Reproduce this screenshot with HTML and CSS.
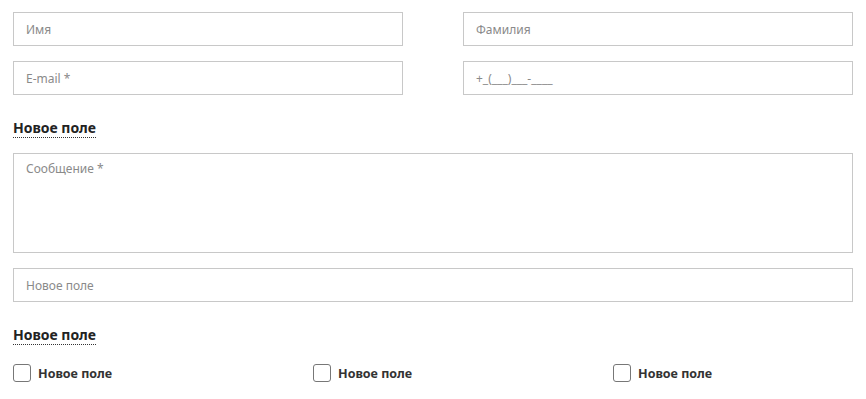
FILE: index.html
```html
<!DOCTYPE html>
<html>
  <head>
    <meta charset="UTF-8"/>
    <title>Форма</title>
    <link rel="stylesheet" href="styles.css">
  </head>
  <body>
    <form class="form">
      <div class="grid-2">
        <input class="field" type="text" placeholder="Имя">
        <input class="field" type="text" placeholder="Фамилия">
        <input class="field" type="email" placeholder="E-mail *">
        <input class="field" type="text" placeholder="+_(___)___-____">
      </div>

      <div class="label label-top"><span>Новое поле</span></div>

      <textarea class="field area" placeholder="Сообщение *"></textarea>

      <input class="field" type="text" placeholder="Новое поле">

      <div class="label label-bottom"><span>Новое поле</span></div>

      <div class="checks">
        <label class="check"><span class="box"></span>Новое поле</label>
        <label class="check"><span class="box"></span>Новое поле</label>
        <label class="check"><span class="box"></span>Новое поле</label>
      </div>
    </form>
  </body>
</html>
```

FILE: styles.css
```css
body {
  margin: 0;
  background: #fff;
  font-family: 'Noto Sans', 'Open Sans', sans-serif;
  color: #222;
}

.form {
  width: 840px;
  padding: 12px 13px;
  display: flex;
  flex-direction: column;
}

.grid-2 {
  display: grid;
  grid-template-columns: 390px 390px;
  column-gap: 60px;
  row-gap: 15px;
}

.field {
  box-sizing: border-box;
  display: block;
  width: 100%;
  height: 34px;
  margin: 0;
  padding: 0 12px;
  border: 1px solid #c8c8c8;
  border-radius: 0;
  background: #fff;
  font-family: inherit;
  font-size: 12px;
  color: #333;
  outline: none;
}

.field::placeholder {
  color: #8a8a8a;
}

.area {
  height: 100px;
  padding: 6px 12px;
  resize: none;
  margin-bottom: 15px;
}

.label {
  font-size: 14px;
  font-weight: bold;
  line-height: 19px;
}

.label-top {
  padding: 23px 0 16px;
}

.label-bottom {
  padding: 23px 0 12px;
}

.label span {
  border-bottom: 1px dotted #333;
}

.checks {
  display: grid;
  grid-template-columns: 300px 300px auto;
  padding-top: 8px;
}

.check {
  display: flex;
  align-items: center;
  gap: 7px;
  font-size: 12.5px;
  font-weight: bold;
  color: #333;
}

.box {
  box-sizing: border-box;
  width: 18px;
  height: 18px;
  border: 1px solid #777;
  border-radius: 3px;
}
```
